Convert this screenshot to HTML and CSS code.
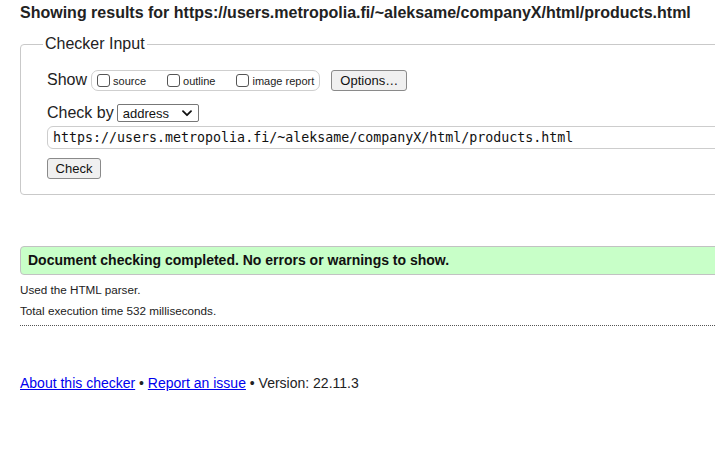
FILE: index.html
```html
<!DOCTYPE html>
<html lang="en">
<head>
<meta charset="utf-8">
<title>Showing results for https://users.metropolia.fi/~aleksame/companyX/html/products.html - Nu Html Checker</title>
<link rel="stylesheet" href="styles.css">
</head>
<body>
<div class="page">
  <h2 class="title">Showing results for https://users.metropolia.fi/~aleksame/companyX/html/products.html</h2>

  <fieldset class="checker">
    <legend class="checker-legend">Checker Input</legend>

    <div class="row row-show">
      <span class="row-label">Show</span>
      <fieldset class="show-group">
        <label class="opt"><input type="checkbox" class="cb"><span>source</span></label>
        <label class="opt"><input type="checkbox" class="cb"><span>outline</span></label>
        <label class="opt"><input type="checkbox" class="cb"><span>image report</span></label>
      </fieldset>
      <button type="button" class="btn btn-options">Options…</button>
    </div>

    <div class="row row-by">
      <span class="row-label">Check by</span>
      <span class="select">
        <span class="select-text">address</span>
        <svg class="chev" width="10" height="7" viewBox="0 0 10 7"><path d="M1 1.2 L5 5.2 L9 1.2" fill="none" stroke="#111" stroke-width="1.8" stroke-linecap="round" stroke-linejoin="round"/></svg>
      </span>
    </div>

    <div class="row row-url">
      <div class="url">https://users.metropolia.fi/~aleksame/companyX/html/products.html</div>
    </div>

    <div class="row row-submit">
      <button type="button" class="btn btn-check">Check</button>
    </div>
  </fieldset>

  <p class="success">Document checking completed. No errors or warnings to show.</p>

  <p class="stats">Used the HTML parser.</p>
  <p class="stats">Total execution time 532 milliseconds.</p>
  <hr class="sep">

  <p class="footer"><a href="#" class="link">About this checker</a> • <a href="#" class="link">Report an issue</a> • Version: 22.11.3</p>
</div>
</body>
</html>
```

FILE: styles.css
```css
html, body {
  margin: 0;
  padding: 0;
  background: #fff;
  overflow: hidden;
}
body {
  font-family: "Liberation Sans", Arial, sans-serif;
  color: #111;
  font-size: 13px;
}
.page {
  padding: 0 0 0 20px;
  margin-right: -40px;
}
.title {
  margin: 0;
  padding-top: 4px;
  font-size: 16px;
  line-height: 18px;
  font-weight: bold;
  color: #222;
  white-space: nowrap;
}
.checker {
  margin: 13px 0 0 0;
  padding: 16px 0 15px 26px;
  border: 1px solid #c9c9c9;
  border-radius: 4px;
  min-width: 0;
}
.checker-legend {
  margin-left: -4px;
  padding: 0 2px;
  font-size: 16px;
  line-height: 18px;
  color: #222;
}
.row {
  display: flex;
  align-items: center;
}
.row-label {
  font-size: 16px;
  line-height: 18px;
  color: #222;
}
.row-show {
  height: 22px;
}
.show-group {
  display: flex;
  align-items: center;
  margin: 0 0 0 4px;
  padding: 0 5px;
  height: 21px;
  box-sizing: border-box;
  border: 1px solid #cfcfcf;
  border-radius: 7px;
  min-width: 0;
}
.opt {
  display: flex;
  align-items: flex-end;
  font-size: 11px;
  line-height: 12px;
  color: #222;
  margin-right: 21px;
}
.opt:last-child {
  margin-right: 0;
}
.cb {
  appearance: none;
  -webkit-appearance: none;
  width: 13px;
  height: 13px;
  margin: 0 3px 0 0;
  border: 1px solid #555;
  border-radius: 3px;
  background: #fff;
  box-sizing: border-box;
}
.btn {
  font-family: "Liberation Sans", Arial, sans-serif;
  font-size: 13px;
  color: #111;
  background: #f0f0f0;
  border: 1px solid #8a8a8a;
  border-radius: 3px;
  height: 21px;
  padding: 0 8px;
  line-height: 19px;
}
.btn-options {
  margin-left: 11px;
  width: 76px;
}
.row-by {
  margin-top: 12px;
  height: 20px;
}
.select {
  display: flex;
  align-items: center;
  justify-content: space-between;
  margin-left: 3px;
  width: 82px;
  height: 18px;
  box-sizing: border-box;
  border: 1px solid #777;
  border-radius: 2px;
  padding: 0 6px 0 5px;
  font-size: 13px;
  color: #111;
}
.row-url {
  margin-top: 3px;
}
.url {
  flex: 1;
  height: 23px;
  box-sizing: border-box;
  border: 1px solid #cdcdcd;
  border-radius: 6px;
  padding: 0 5px;
  font-family: "DejaVu Sans Mono", "Liberation Mono", monospace;
  font-size: 13.3px;
  line-height: 21px;
  color: #111;
  white-space: nowrap;
  margin-right: -1px;
}
.row-submit {
  margin-top: 9px;
}
.btn-check {
  width: 54px;
  padding: 0;
}
.success {
  margin: 51px 0 0 0;
  height: 29px;
  box-sizing: border-box;
  background: #c8ffc8;
  border: 1px solid #c2c2c2;
  border-radius: 4px;
  padding: 0 7px;
  font-size: 14px;
  font-weight: bold;
  line-height: 27px;
  color: #111;
}
.stats {
  margin: 0;
  font-size: 11.7px;
  line-height: 14px;
  color: #222;
}
.success + .stats {
  margin-top: 8px;
}
.stats + .stats {
  margin-top: 7px;
}
.sep {
  margin: 7px 40px 0 0;
  border: 0;
  border-top: 1px dotted #555;
  height: 0;
}
.footer {
  margin: 49px 0 0 0;
  font-size: 14px;
  line-height: 16px;
  color: #222;
}
.link {
  color: #0000ee;
  text-decoration: underline;
}
```
